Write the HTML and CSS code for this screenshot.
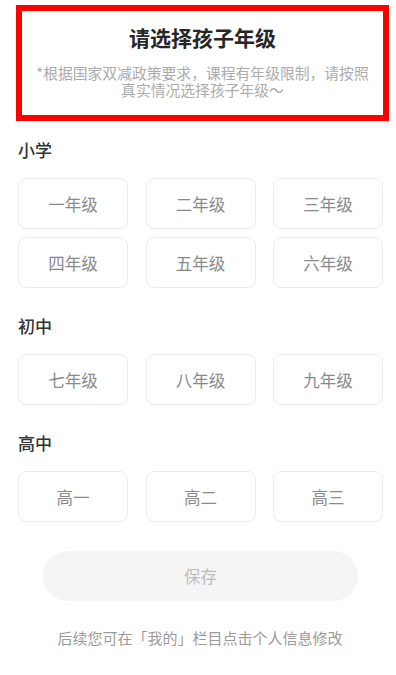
FILE: index.html
```html
<!DOCTYPE html>
<html lang="zh-CN">
<head>
<meta charset="utf-8">
<title>请选择孩子年级</title>
<link rel="stylesheet" href="styles.css">
</head>
<body>
<div class="page">
  <header class="intro">
    <h1 class="intro-title">请选择孩子年级</h1>
    <p class="intro-note">*根据国家双减政策要求，课程有年级限制，请按照真实情况选择孩子年级～</p>
  </header>

  <section class="group group-first">
    <h2 class="group-title">小学</h2>
    <div class="grid">
      <div class="tile">一年级</div>
      <div class="tile">二年级</div>
      <div class="tile">三年级</div>
      <div class="tile">四年级</div>
      <div class="tile">五年级</div>
      <div class="tile">六年级</div>
    </div>
  </section>

  <section class="group">
    <h2 class="group-title">初中</h2>
    <div class="grid">
      <div class="tile">七年级</div>
      <div class="tile">八年级</div>
      <div class="tile">九年级</div>
    </div>
  </section>

  <section class="group">
    <h2 class="group-title">高中</h2>
    <div class="grid">
      <div class="tile">高一</div>
      <div class="tile">高二</div>
      <div class="tile">高三</div>
    </div>
  </section>

  <div class="actions">
    <button class="save" type="button">保存</button>
  </div>
  <p class="footnote">后续您可在「我的」栏目点击个人信息修改</p>
</div>
</body>
</html>
```

FILE: styles.css
```css
* {
  box-sizing: border-box;
}

html, body {
  margin: 0;
  padding: 0;
  background: #ffffff;
}

body {
  font-family: "Noto Sans CJK SC", "Noto Sans", sans-serif;
  color: #222;
}

.page {
  width: 396px;
  padding-top: 5px;
}

.intro {
  margin: 0 7px 0 16px;
  border: 6px solid #ff0000;
  padding: 12px 8px 17px;
  text-align: center;
}

.intro-title {
  margin: 0;
  font-size: 21px;
  line-height: 28px;
  font-weight: 700;
  color: #262626;
}

.intro-note {
  margin: 13px 0 0;
  font-size: 14.8px;
  line-height: 17px;
  color: #ababab;
}

.group {
  padding: 0 13px 0 18px;
  margin-top: 27px;
}

.group-first {
  margin-top: 17px;
}

.group + .group {
  margin-top: 26px;
}

.group-title {
  margin: 0 0 16px;
  font-size: 17px;
  line-height: 24px;
  font-weight: 500;
  color: #333;
}

.grid {
  display: grid;
  grid-template-columns: repeat(3, 110px);
  column-gap: 17.5px;
  row-gap: 8px;
}

.tile {
  height: 51px;
  border: 1px solid #ececec;
  border-radius: 8px;
  display: flex;
  align-items: center;
  justify-content: center;
  font-size: 16.5px;
  color: #8a8a8a;
}

.actions {
  display: flex;
  justify-content: center;
  margin-top: 29px;
  padding-left: 5px;
}

.save {
  width: 315px;
  height: 50px;
  border: none;
  border-radius: 25px;
  background: #f5f5f5;
  color: #bdbdbd;
  font-family: inherit;
  font-size: 16.5px;
}

.footnote {
  margin: 27px 0 0;
  text-align: center;
  font-size: 15px;
  line-height: 20px;
  color: #9a9a9a;
  padding-left: 4px;
}
```
